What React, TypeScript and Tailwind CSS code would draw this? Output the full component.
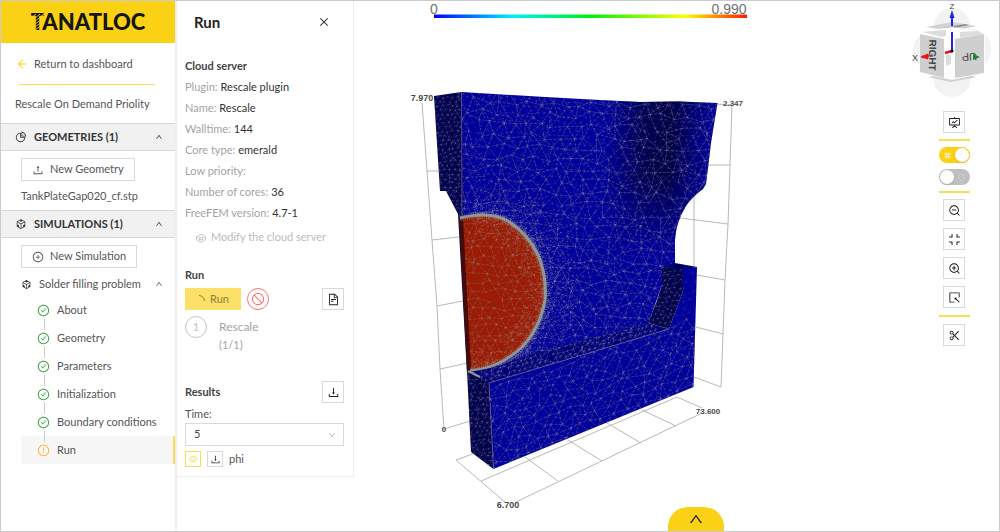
import React, { useState } from 'react';
import {
    AiOutlineArrowLeft,
    AiOutlineCheckCircle,
    AiOutlineClose,
    AiOutlineCloudServer,
    AiOutlineCodeSandbox,
    AiOutlineCompress,
    AiOutlineDown,
    AiOutlineDownload,
    AiOutlineExclamationCircle,
    AiOutlineEye,
    AiOutlineFileText,
    AiOutlineFundProjectionScreen,
    AiOutlineNumber,
    AiOutlinePieChart,
    AiOutlinePlusCircle,
    AiOutlineScissor,
    AiOutlineSelect,
    AiOutlineStop,
    AiOutlineUp,
    AiOutlineUpload,
    AiOutlineZoomIn,
    AiOutlineZoomOut,
} from 'react-icons/ai';

const STEPS = ['About', 'Geometry', 'Parameters', 'Initialization', 'Boundary conditions', 'Run'];

const SERVER = [
    { label: 'Plugin', value: 'Rescale plugin' },
    { label: 'Name', value: 'Rescale' },
    { label: 'Walltime', value: '144' },
    { label: 'Core type', value: 'emerald' },
    { label: 'Low priority', value: '' },
    { label: 'Number of cores', value: '36' },
    { label: 'FreeFEM version', value: '4.7-1' },
];

// Small seeded generator, so the mesh is the same on every render
function createRandom(seed: number) {
    let s = seed;
    return () => {
        s = (s * 1664525 + 1013904223) % 4294967296;
        return s / 4294967296;
    };
}

/**
 * Jittered triangular lattice over a box, returned as path data
 */
function triangulate(x0: number, y0: number, x1: number, y1: number, size: number, seed: number, slope = 0) {
    const random = createRandom(seed);
    const cols = Math.ceil((x1 - x0) / size) + 2;
    const rows = Math.ceil((y1 - y0) / (size * 0.86)) + 2;
    const at: number[][][] = [];
    for (let j = 0; j < rows; j++) {
        at.push([]);
        for (let i = 0; i < cols; i++) {
            const x = x0 + (i - (j % 2) / 2) * size + (random() - 0.5) * size * 0.6;
            const y = y0 + j * size * 0.86 + (random() - 0.5) * size * 0.6 + (x - x0) * slope;
            at[j].push([x, y]);
        }
    }
    let edges = '';
    let nodes = '';
    const edge = (a: number[], b: number[]) => {
        if (random() < 0.12) return;
        edges += `M${a[0].toFixed(1)} ${a[1].toFixed(1)}L${b[0].toFixed(1)} ${b[1].toFixed(1)}`;
    };
    for (let j = 0; j < rows; j++) {
        for (let i = 0; i < cols; i++) {
            const p = at[j][i];
            if (random() < 0.6) nodes += `M${p[0].toFixed(1)} ${p[1].toFixed(1)}h.9`;
            if (i + 1 < cols) edge(p, at[j][i + 1]);
            if (j + 1 < rows) {
                edge(p, at[j + 1][i]);
                const k = j % 2 ? i - 1 : i + 1;
                if (k >= 0 && k < cols) edge(p, at[j + 1][k]);
            }
        }
    }
    return { edges, nodes };
}

/**
 * Refined cells near the interface: specks that thin out away from the ring
 */
function refine(outward: boolean, count: number, depth: number, seed: number) {
    const random = createRandom(seed);
    let d = '';
    for (let i = 0; i < count; i++) {
        const angle = -Math.PI / 2 + random() * Math.PI;
        const off = Math.pow(random(), 2.4) * depth * (outward ? 1 : -1);
        const x = 473 + Math.cos(angle) * (72 + off);
        const y = 292 + Math.sin(angle) * (79 + off);
        d += `M${x.toFixed(1)} ${y.toFixed(1)}l${(random() * 2.4 - 1.2).toFixed(1)} ${(random() * 2.4 - 1.2).toFixed(1)}`;
    }
    return d;
}

const BODY = 'M461.500 92L545 97L600 100L640 102L680 101.500L717.500 103L711 143L708 168L706 184L703 189Q692 197 686 206Q676 222 675 240L675 264L663 270L662 285L648 324L489 383L468 374L461 215Z';
const BUBBLE = 'M460 217Q490 211 508 221Q531 236 540 260Q547 280 545 300Q540 328 522 347Q500 368 470 371Z';
const RING = 'M460 218Q490 211 508 221Q531 236 540 260Q547 280 545 300Q540 328 522 347Q500 368 470 371';
const SIDE = 'M434 96L461.500 92L463 240L470 373L467 374L458 214L446 191L440 191Z';
const LEDGE = 'M468 372Q500 368 520 357L648 323L669 329L489 383Z';
const FRONT = 'M489 383L669 329L683 291L683 269L697 267L693.500 387L493.500 469Z';
const BASE_SIDE = 'M467 371L489 383L493.500 469L471 452Z';
const STOP = 'M662 267L683 269L683 291L669 329L648 323L656 303L662 285Z';

const COARSE = triangulate(430, 88, 722, 400, 13, 7, 0.03);
const MEDIUM = triangulate(430, 88, 722, 480, 8, 19, 0.05);
const INNER = triangulate(455, 205, 550, 380, 10, 31);
const LOWER = triangulate(465, 400, 700, 560, 11, 43, -0.36);
const FINE = triangulate(430, 85, 705, 480, 5, 57, -0.05);
const STRIP = triangulate(465, 360, 700, 480, 5, 64, -0.3);

function Mesh({ mesh, clip, opacity = 0.5 }: { mesh: { edges: string; nodes: string }; clip: string; opacity?: number }) {
    return (
        <g clipPath={`url(#${clip})`} fill="none">
            <path d={mesh.edges} stroke="#9090a4" strokeWidth="0.55" strokeDasharray="3 1.200" opacity={opacity} />
            <path d={mesh.nodes} stroke="#aaaaa2" strokeWidth="0.9" opacity={opacity + 0.1} />
        </g>
    );
}

function Viewer() {
    return (
        <svg viewBox="354 1 555 530" className="h-full w-full" role="img" aria-label="phi">
            <defs>
                <linearGradient id="scale">
                    <stop offset="0" stopColor="#0000ff" />
                    <stop offset="0.25" stopColor="#00f0ff" />
                    <stop offset="0.5" stopColor="#00ee10" />
                    <stop offset="0.8" stopColor="#ffff00" />
                    <stop offset="1" stopColor="#ff1a00" />
                </linearGradient>
                <linearGradient id="shade" x1="605" x2="712" y1="160" y2="166" gradientUnits="userSpaceOnUse">
                    <stop offset="0" stopColor="#00003c" stopOpacity="0" />
                    <stop offset="0.35" stopColor="#00003c" stopOpacity="0.75" />
                    <stop offset="0.6" stopColor="#00003c" stopOpacity="0.9" />
                    <stop offset="0.8" stopColor="#00003c" stopOpacity="0.4" />
                    <stop offset="1" stopColor="#00003c" stopOpacity="0" />
                </linearGradient>
                <linearGradient id="fade" x1="0" x2="0" y1="100" y2="250" gradientUnits="userSpaceOnUse">
                    <stop offset="0" stopColor="#fff" />
                    <stop offset="0.5" stopColor="#fff" />
                    <stop offset="1" stopColor="#000" />
                </linearGradient>
                <mask id="shadeMask" maskUnits="userSpaceOnUse" x="600" y="90" width="130" height="180">
                    <rect x="600" y="90" width="130" height="180" fill="url(#fade)" />
                </mask>
                <clipPath id="body"><path d={BODY} /></clipPath>
                <clipPath id="bubble"><path d={BUBBLE} /></clipPath>
                <clipPath id="side"><path d={SIDE} /></clipPath>
                <clipPath id="ledge"><path d={LEDGE} /></clipPath>
                <clipPath id="front"><path d={FRONT} /></clipPath>
                <clipPath id="baseSide"><path d={BASE_SIDE} /></clipPath>
                <clipPath id="stopper"><path d={STOP} /></clipPath>
            </defs>

            {/* colour scale */}
            <rect x="434" y="14.500" width="313" height="3.500" fill="url(#scale)" />
            <g fontFamily="Liberation Sans, Arial, sans-serif" fontSize="14" fill="#707070" textAnchor="middle">
                <text x="434" y="14">0</text>
                <text x="729" y="14">0.990</text>
            </g>

            {/* bounding grid */}
            <path
                d="M422 103L427 171L432 240L437 306L440 369L444 430M427 171H440M432 240L459 237M437 306L463 301M440 369L468 363M444 429L470 421M715 104L732 105L730 165L728 224L725 280L723 334L721 387M707 165H730M680 218L728 224M694 190V268M697 275L725 280M696 327L723 334M694 377L721 387M475 453L456 460L506 503M481 481L677 397L702 408M516 502L702 413M525 457L558 481M568 440L602 461M607 423L641 443M642 410L676 426"
                fill="none"
                stroke="#b0b0b0"
                strokeWidth="0.9"
            />

            {/* body */}
            <path d={BODY} fill="#00009a" />
            <g mask="url(#shadeMask)">
                <path d={BODY} fill="url(#shade)" />
            </g>
            <Mesh mesh={COARSE} clip="body" opacity={0.7} />
            <Mesh mesh={MEDIUM} clip="body" opacity={0.28} />
            <g clipPath="url(#body)">
                <path d={refine(true, 2300, 34, 5)} stroke="#8a8a9a" strokeWidth="0.7" opacity="0.8" />
            </g>

            <path d={SIDE} fill="#00004e" />
            <Mesh mesh={FINE} clip="side" opacity={0.4} />
            <path d="M461.500 92L462 215" stroke="#55558c" strokeWidth="0.8" />

            {/* bubble */}
            <path d={BUBBLE} fill="#9b1c04" />
            <Mesh mesh={INNER} clip="bubble" opacity={0.55} />
            <g clipPath="url(#bubble)">
                <path d={refine(false, 1300, 22, 11)} stroke="#a08a80" strokeWidth="0.7" opacity="0.75" />
            </g>
            <path d="M459 217L463 217L471 369L467 370Z" fill="#480c08" />
            <path d={RING} fill="none" stroke="#929693" strokeWidth="7" strokeDasharray="0.8 1.400" opacity="0.55" />
            <path d={RING} fill="none" stroke="#929693" strokeWidth="3" />

            {/* base */}
            <path d={LEDGE} fill="#000078" />
            <Mesh mesh={STRIP} clip="ledge" opacity={0.6} />
            <path d="M662 267L675 263L697 267L683 270Z" fill="#00006c" />
            <path d={FRONT} fill="#00009a" />
            <Mesh mesh={LOWER} clip="front" opacity={0.65} />
            <Mesh mesh={MEDIUM} clip="front" opacity={0.2} />
            <path d={STOP} fill="#00004c" />
            <Mesh mesh={FINE} clip="stopper" opacity={0.35} />
            <path d={BASE_SIDE} fill="#00004c" />
            <Mesh mesh={FINE} clip="baseSide" opacity={0.4} />
            <path d="M493.500 469L489 383L669 329" fill="none" stroke="#60608c" strokeWidth="0.7" />
            <path d="M468 371L480 377" stroke="#929693" strokeWidth="2" />

            <g fontFamily="Liberation Sans, Arial, sans-serif" fontWeight="bold" fill="#4a4a4a" textAnchor="middle">
                <text x="422" y="101" fontSize="9">7.970</text>
                <text x="733" y="106" fontSize="8">2.347</text>
                <text x="444" y="432" fontSize="8">0</text>
                <text x="708" y="414" fontSize="8">73.600</text>
                <text x="508" y="508" fontSize="9">6.700</text>
            </g>
        </svg>
    );
}

function NavigationCube() {
    return (
        <svg viewBox="909 1 90 97" className="h-[97px] w-[90px]" role="img" aria-label="Orientation">
            <g fill="#f3f3f3">
                <circle cx="952" cy="26" r="18" />
                <circle cx="952" cy="78" r="19" />
                <circle cx="933" cy="51" r="20" />
                <circle cx="971" cy="49" r="20" />
            </g>
            <path d="M926 27L952 22L977 26L951 31Z" fill="#d2d2d2" />
            <path d="M938 29L965 24L969 25L944 30Z" fill="#8c8c8c" />
            <path d="M928 77L954 73L977 77L951 82Z" fill="#d0d0d0" />
            <path d="M920 31L952 27L985 32V73L952 80L919 73Z" fill="#fdfdfd" />
            <path d="M922 32L946 30V36L942 37ZM960 32L978 31L983 34L960 38ZM946 55H951V64L946 66Z" fill="#dcdcdc" />
            <path d="M920 34L944 39V78L920 72Z" fill="#cfcfcf" />
            <path d="M955 39L984 34V73L955 78Z" fill="#cfcfcf" />
            <path d="M952 51V32M952 26V14" stroke="#2222ee" strokeWidth="2" />
            <path d="M952 10L954.500 18H949.500Z" fill="#2222ee" />
            <path d="M952 51L945 53M929 56L922 57" stroke="#ee1111" strokeWidth="2.500" />
            <path d="M920 57L928 53.500V59.500Z" fill="#ee1111" />
            <circle cx="952" cy="51" r="1.600" fill="#111" />
            <g fontFamily="Liberation Sans, Arial, sans-serif" fill="#444" textAnchor="middle">
                <text x="915" y="61" fontSize="9">X</text>
                <text x="952" y="9" fontSize="8">Z</text>
                <text fontSize="10" fontWeight="bold" transform="translate(929 55) rotate(91)">RIGHT</text>
                <text fontSize="11" transform="translate(969 53) rotate(176)">UP</text>
            </g>
            <path d="M973 54L980 57L973 60Z" fill="#178a28" />
        </svg>
    );
}

function IconButton({ label, children }: { label: string; children: React.ReactNode }) {
    return (
        <button
            type="button"
            aria-label={label}
            className="flex h-[22px] w-[22px] shrink-0 items-center justify-center border border-[#d9d9d9] bg-white text-[13px] text-[#222]"
        >
            {children}
        </button>
    );
}

function SectionTitle({ icon, children }: { icon: React.ReactNode; children: React.ReactNode }) {
    return (
        <button type="button" className="flex h-7 w-full items-center border-y border-[#d9d9d9] bg-[#f1f1f1] pl-[14px] pr-3 font-bold text-[#333]">
            <span className="mr-[7px] text-[12px]">{icon}</span>
            {children}
            <AiOutlineUp className="ml-auto h-2 w-2" />
        </button>
    );
}

function Sidebar() {
    return (
        <aside className="flex w-44 shrink-0 flex-col border-r-2 border-[#eee]">
            <div className="flex h-[42px] shrink-0 items-center justify-center bg-[#fad114]">
                <div className="relative text-[22px] leading-6 font-black text-[#151515]">
                    TANATLOC
                    {/* hatching over the first letter */}
                    <svg viewBox="0 0 14 24" className="absolute top-0 left-0 h-6 w-[14px]">
                        <path d="M-1 9L5 4M-1 12L9 4M3 12L13 4M4 14L14 7M4 17L12 11M4 20L12 14" stroke="#fad114" strokeWidth="0.9" />
                    </svg>
                </div>
            </div>

            <a href="#dashboard" className="mt-[11px] flex h-5 items-center pl-[15px]">
                <AiOutlineArrowLeft className="mr-[6px] h-3 w-3 text-[#fad114]" />
                Return to dashboard
            </a>
            <hr className="mt-[10px] mr-5 ml-[18px] border-t border-[#fbdc50]" />
            <div className="my-[9px] pl-[14px] leading-5">Rescale On Demand Priolity</div>

            <SectionTitle icon={<AiOutlinePieChart />}>GEOMETRIES (1)</SectionTitle>
            <div className="flex flex-col items-start pt-[7px] pb-1 pl-5">
                <button type="button" className="flex h-[23px] items-center gap-[6px] border border-[#d9d9d9] px-[10px]">
                    <AiOutlineUpload className="h-3 w-3" />
                    New Geometry
                </button>
                <div className="mt-[5px] leading-5">TankPlateGap020_cf.stp</div>
            </div>

            <SectionTitle icon={<AiOutlineCodeSandbox />}>SIMULATIONS (1)</SectionTitle>
            <div className="flex flex-col pt-[7px] pl-5">
                <button type="button" className="flex h-[23px] items-center gap-[6px] self-start border border-[#d9d9d9] px-[10px]">
                    <AiOutlinePlusCircle className="h-3 w-3" />
                    New Simulation
                </button>
                <button type="button" className="mt-1 flex h-6 items-center pr-3">
                    <AiOutlineCodeSandbox className="mr-[7px] h-[11px] w-[11px] text-[#222]" />
                    Solder filling problem
                    <AiOutlineUp className="ml-auto h-2 w-2" />
                </button>
                <ol>
                    {STEPS.map((step, i) => {
                        const last = i === STEPS.length - 1;
                        return (
                            <li key={step} className={last ? 'border-r-2 border-[#fbdc50] bg-[#f7f7f7]' : ''}>
                                <button type="button" className="relative flex h-7 w-full items-center gap-[7px] pl-4">
                                    {last ? (
                                        <AiOutlineExclamationCircle className="h-[13px] w-[13px] text-[#ffb02e]" />
                                    ) : (
                                        <AiOutlineCheckCircle className="h-[13px] w-[13px] text-[#35a13c]" />
                                    )}
                                    {!last && <span className="absolute top-[22px] left-[23px] z-10 h-3 w-px bg-[#ccc]" />}
                                    {step}
                                </button>
                            </li>
                        );
                    })}
                </ol>
            </div>
        </aside>
    );
}

function RunPanel() {
    const [time, setTime] = useState('5');

    return (
        <section className="flex w-[177px] shrink-0 flex-col self-start border-r border-b border-[#eee] pr-[9px] pb-2 pl-2">
            <header className="flex h-[42px] items-center justify-between pr-[14px] pl-[9px]">
                <h1 className="text-[15px] font-bold text-[#222]">Run</h1>
                <button type="button" aria-label="Close" className="text-[12px] text-[#333]">
                    <AiOutlineClose />
                </button>
            </header>

            <h2 className="mt-[13px] leading-5 font-bold text-[#444]">Cloud server</h2>
            <dl className="leading-[21px]">
                {SERVER.map((item) => (
                    <div key={item.label} className="flex gap-[3px]">
                        <dt className="text-[#a3a3a3]">{item.label}:</dt>
                        <dd className="text-[#333]">{item.value}</dd>
                    </div>
                ))}
            </dl>
            <button type="button" disabled className="mt-1 flex h-[21px] items-center gap-1 pl-[10px] text-[#bcbcbc]">
                <AiOutlineCloudServer className="h-3 w-3" />
                Modify the cloud server
            </button>

            <h2 className="mt-[17px] leading-5 font-bold text-[#444]">Run</h2>
            <div className="mt-[3px] flex items-center">
                <button type="button" disabled className="flex h-[22px] w-14 items-center justify-end gap-1 bg-[#fde067] pr-3 text-[#8f8140]">
                    <svg viewBox="0 0 10 10" className="h-[10px] w-[10px]">
                        <path d="M3 1.500Q8 2 8.500 7" fill="none" stroke="currentColor" />
                    </svg>
                    Run
                </button>
                <button
                    type="button"
                    aria-label="Stop"
                    className="ml-[6px] flex h-[22px] w-[22px] items-center justify-center rounded-full border border-[#ff7275] text-[14px] text-[#ff7275]"
                >
                    <AiOutlineStop />
                </button>
                <div className="ml-auto">
                    <IconButton label="Log">
                        <AiOutlineFileText />
                    </IconButton>
                </div>
            </div>

            <div className="mt-[6px] flex gap-3 text-[#a3a3a3]">
                <span className="flex h-[22px] w-[22px] items-center justify-center rounded-full border border-[#c4c4c4] text-[12px] text-[#c4c4c4]">1</span>
                <div>
                    <div className="text-[12px] leading-[21px]">Rescale</div>
                    <div className="leading-4">(1/1)</div>
                </div>
            </div>

            <div className="mt-7 flex items-center justify-between">
                <h2 className="font-bold text-[#444]">Results</h2>
                <IconButton label="Download results">
                    <AiOutlineDownload />
                </IconButton>
            </div>
            <label htmlFor="time" className="mt-[2px] leading-[18px]">Time:</label>
            <div className="relative">
                <select
                    id="time"
                    value={time}
                    onChange={(e) => setTime(e.target.value)}
                    className="block h-[23px] w-full appearance-none border border-[#d9d9d9] bg-white px-2 text-[#444]"
                >
                    <option value="5">5</option>
                </select>
                <AiOutlineDown className="pointer-events-none absolute top-2 right-2 h-2 w-2 text-[#aaa]" />
            </div>
            <div className="mt-[5px] flex items-center gap-[6px]">
                <button type="button" aria-label="Show phi" className="flex h-4 w-4 items-center justify-center border border-[#fbdc50] text-[10px] text-[#fbdc50]">
                    <AiOutlineEye />
                </button>
                <button type="button" aria-label="Download phi" className="flex h-4 w-4 items-center justify-center border border-[#d9d9d9] text-[11px] text-[#333]">
                    <AiOutlineDownload />
                </button>
                phi
            </div>
        </section>
    );
}

function Switch({ label, initial, children }: { label: string; initial: boolean; children: React.ReactNode }) {
    const [checked, setChecked] = useState(initial);

    return (
        <label
            className={`relative flex h-4 w-[31px] items-center rounded-full px-1 text-[9px] text-white ${
                checked ? 'justify-start bg-[#fad114]' : 'justify-end bg-[#bfbfbf]'
            }`}
        >
            <input
                type="checkbox"
                role="switch"
                aria-label={label}
                checked={checked}
                onChange={() => setChecked(!checked)}
                className="absolute inset-0 appearance-none"
            />
            {children}
            <span className={`absolute top-px h-[14px] w-[14px] rounded-full bg-white shadow-sm ${checked ? 'right-px' : 'left-px'}`} />
        </label>
    );
}

function Toolbar() {
    return (
        <aside className="flex w-[90px] shrink-0 flex-col items-center">
            <NavigationCube />
            <div className="mt-[13px] flex flex-col items-center">
                <IconButton label="Snapshot">
                    <AiOutlineFundProjectionScreen />
                </IconButton>
                <hr className="my-[6px] w-[31px] border-t-2 border-[#fbdc50]" />
                <Switch label="Grid" initial>
                    <AiOutlineNumber />
                </Switch>
                <div className="h-[6px]" />
                <Switch label="Transparent" initial={false}>
                    <svg viewBox="0 0 10 10" className="h-[9px] w-[9px]">
                        <circle cx="5" cy="5" r="3.500" fill="none" stroke="#ddd" strokeDasharray="2 1" />
                    </svg>
                </Switch>
                <hr className="my-[6px] w-[31px] border-t-2 border-[#fbdc50]" />
                <div className="flex flex-col gap-[7px]">
                    <IconButton label="Zoom out">
                        <AiOutlineZoomOut />
                    </IconButton>
                    <IconButton label="Fit">
                        <AiOutlineCompress />
                    </IconButton>
                    <IconButton label="Zoom in">
                        <AiOutlineZoomIn />
                    </IconButton>
                    <IconButton label="Zoom to selection">
                        <AiOutlineSelect />
                    </IconButton>
                </div>
                <hr className="my-[7px] w-[31px] border-t-2 border-[#fbdc50]" />
                <IconButton label="Section view">
                    <AiOutlineScissor />
                </IconButton>
            </div>
        </aside>
    );
}

export default function App() {
    return (
        <div className="flex h-screen overflow-hidden border border-[#cbcbcb] bg-white font-[Lato,sans-serif] text-[11px] text-[#555]">
            <Sidebar />
            <RunPanel />
            <main className="relative flex min-w-0 flex-1">
                <div className="min-w-0 flex-1">
                    <Viewer />
                </div>
                <Toolbar />
                <button
                    type="button"
                    aria-label="Open drawer"
                    className="absolute bottom-0 left-[53%] flex h-6 w-14 -translate-x-1/2 items-center justify-center rounded-t-[20px] bg-[#fad114] text-[#222]"
                >
                    <AiOutlineUp className="h-4 w-4" />
                </button>
            </main>
        </div>
    );
}
